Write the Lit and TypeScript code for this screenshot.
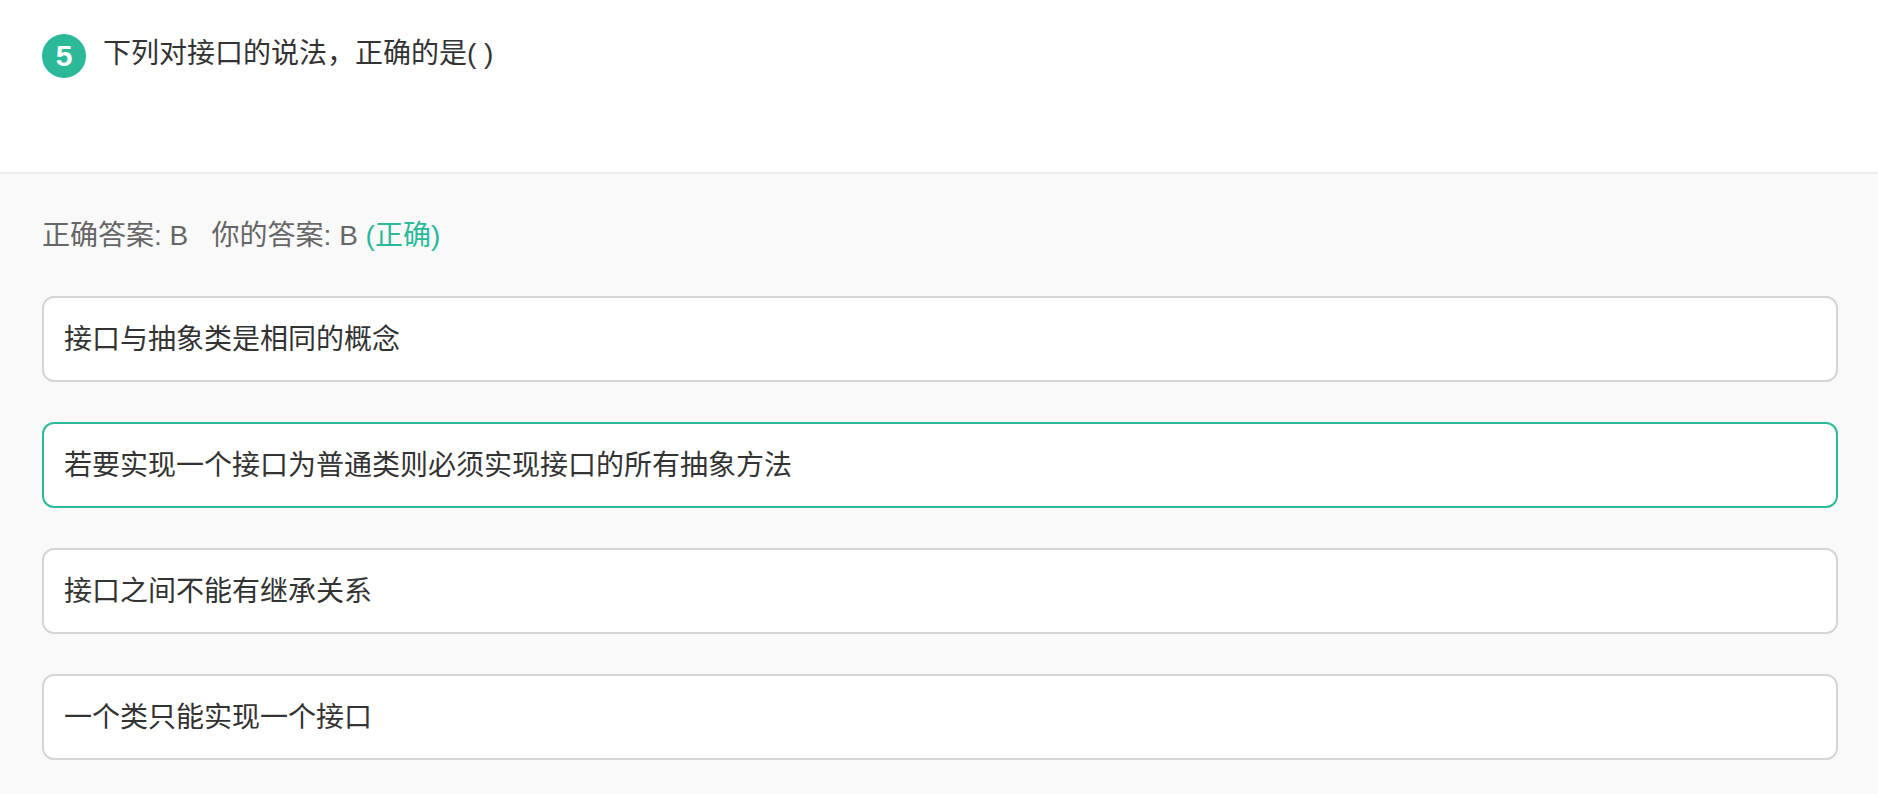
import { LitElement, html, css } from "lit";
import { customElement } from "lit/decorators.js";

const OPTIONS = [
  { text: "接口与抽象类是相同的概念", correct: false },
  { text: "若要实现一个接口为普通类则必须实现接口的所有抽象方法", correct: true },
  { text: "接口之间不能有继承关系", correct: false },
  { text: "一个类只能实现一个接口", correct: false },
];

@customElement("app-root")
export class AppRoot extends LitElement {
  static styles = css`
    :host {
      display: block;
      width: 1878px;
      height: 794px;
      overflow: hidden;
      background: #f9f9f9;
      font-family: "Liberation Sans", "Noto Sans CJK SC", sans-serif;
    }
    .question {
      box-sizing: border-box;
      height: 174px;
      background: #fff;
      border-bottom: 2px solid #eeeeee;
      padding: 34px 0 0 42px;
      display: flex;
      align-items: flex-start;
    }
    .num {
      flex: none;
      width: 44px;
      height: 44px;
      border-radius: 50%;
      background: #2bb99a;
      color: #fff;
      font-size: 30px;
      font-weight: 700;
      line-height: 44px;
      text-align: center;
    }
    .title {
      margin-left: 17px;
      margin-top: 0;
      font-size: 28px;
      line-height: 40px;
      color: #333;
    }
    .answers {
      padding: 42px 40px 0 42px;
    }
    .summary {
      font-size: 28px;
      line-height: 40px;
      color: #666;
      white-space: pre;
    }
    .ok {
      color: #2bb99a;
    }
    .options {
      display: flex;
      flex-direction: column;
      gap: 40px;
      margin-top: 40px;
    }
    .option {
      box-sizing: border-box;
      height: 86px;
      padding: 0 20px;
      background: #fff;
      border: 2px solid #d5d5d5;
      border-radius: 12px;
      font-size: 28px;
      line-height: 84px;
      color: #333;
    }
    .option.correct {
      border-color: #2bb99a;
    }
  `;

  render() {
    return html`
      <div class="question">
        <div class="num">5</div>
        <div class="title">下列对接口的说法，正确的是( )</div>
      </div>
      <div class="answers">
        <div class="summary">正确答案: B   你的答案: B <span class="ok">(正确)</span></div>
        <div class="options">
          ${OPTIONS.map(
            (o) => html`<div class="option ${o.correct ? "correct" : ""}">${o.text}</div>`
          )}
        </div>
      </div>
    `;
  }
}
